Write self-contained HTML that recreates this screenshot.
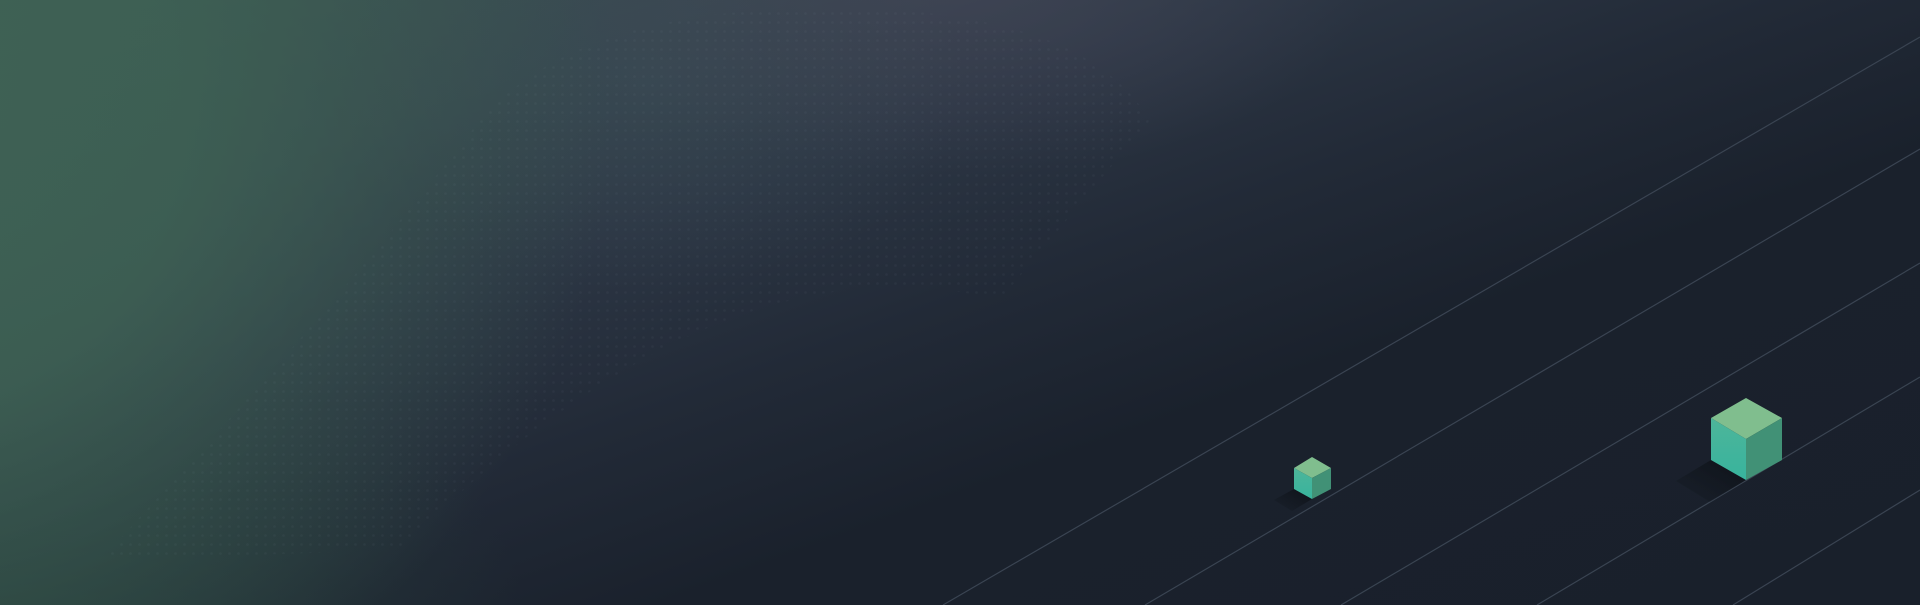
<!DOCTYPE html>
<html><head><meta charset="utf-8"><style>
html,body{margin:0;padding:0;width:1920px;height:605px;overflow:hidden;background:#19202b}
.bg{position:absolute;inset:0;
background:
radial-gradient(ellipse 950px 850px at -150px 120px, rgba(62,98,84,1), rgba(62,98,84,0.85) 35%, rgba(62,98,84,0.35) 60%, rgba(62,98,84,0) 80%),
radial-gradient(ellipse 700px 400px at 0px 620px, rgba(40,66,60,0.8), rgba(40,66,60,0) 75%),
radial-gradient(ellipse 600px 280px at 950px -20px, rgba(68,70,88,0.7), rgba(68,70,88,0) 70%),
radial-gradient(ellipse 450px 300px at 650px 80px, rgba(62,80,90,0.45), rgba(62,80,90,0) 70%),
linear-gradient(160deg,#3c5452 0%,#35454d 20%,#2c3644 35%,#222a37 50%,#1a212c 65%,#19202b 100%);}
svg{position:absolute;left:0;top:0}
</style></head><body>
<div class="bg"></div>
<svg width="1920" height="605" viewBox="0 0 1920 605">
<defs>
<linearGradient id="lf" x1="0" y1="0" x2="0" y2="1"><stop offset="0" stop-color="#4db59a"/><stop offset="1" stop-color="#38b49d"/></linearGradient>
<linearGradient id="sh" x1="1" y1="0" x2="0" y2="1"><stop offset="0" stop-color="#0d1117" stop-opacity="0.9"/><stop offset="1" stop-color="#0d1117" stop-opacity="0"/></linearGradient>
<pattern id="dp" width="9" height="9" patternUnits="userSpaceOnUse"><circle cx="4.5" cy="4.5" r="1.3" fill="#7d97a6" fill-opacity="0.06"/></pattern>
</defs>
<path d="M100 560 C250 400 380 250 480 120 C560 30 700 0 900 10 C1000 20 1100 40 1150 120 L1000 300 C800 250 600 350 400 550 Z" fill="url(#dp)"/>
<g stroke="#3a4452" stroke-width="1.2" fill="none">
<line x1="943" y1="605" x2="1920" y2="37"/>
<line x1="1145" y1="605" x2="1920" y2="149"/>
<line x1="1341" y1="605" x2="1920" y2="263"/>
<line x1="1537" y1="605" x2="1920" y2="377"/>
<line x1="1733" y1="605" x2="1920" y2="490"/>
</g>
<polygon points="1294,489 1312,499 1292,511 1274,500" fill="url(#sh)"/>
<polygon points="1312,457 1331,468 1312,478 1294,468" fill="#80be8e"/>
<polygon points="1294,468 1312,478 1312,499 1294,489" fill="url(#lf)"/>
<polygon points="1331,468 1312,478 1312,499 1331,489" fill="#419176"/>
<polygon points="1711,460 1746,480 1710,502 1676,481" fill="url(#sh)"/>
<polygon points="1746,398 1782,418 1746,439 1711,418" fill="#80be8e"/>
<polygon points="1711,418 1746,439 1746,480 1711,460" fill="url(#lf)"/>
<polygon points="1782,418 1746,439 1746,480 1782,460" fill="#419176"/>
</svg>
</body></html>
